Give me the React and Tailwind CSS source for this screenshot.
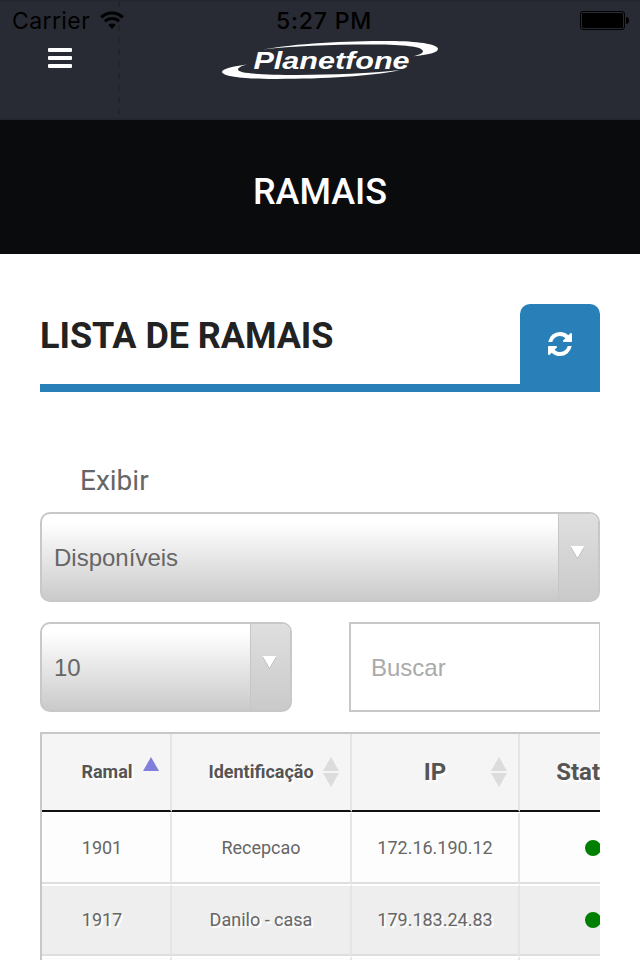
import clsx from "clsx";

const columns = [
    { label: "Ramal", width: "w-[130px]", pad: "pl-[2px]", sort: "asc" },
    { label: "Identificação", width: "w-[180px]", sort: "both" },
    { label: "IP", width: "w-[168px]", sort: "both", big: true },
    { label: "Status", width: "w-[148px]", pad: "pr-1", big: true },
];

const rows = [
    { ramal: "1901", nome: "Recepcao", ip: "172.16.190.12" },
    { ramal: "1917", nome: "Danilo - casa", ip: "179.183.24.83" },
    { ramal: "", nome: "", ip: "" },
];

const StatusBar = () => (
    <div className="flex h-10 items-center px-3 text-black">
        <div className="flex flex-1 items-center gap-[10px]">
            <span className="font-['Inter',sans-serif] text-[23px] leading-10 tracking-[0.4px]">Carrier</span>
            <svg className="-mt-[2px] h-[18px] w-6" viewBox="0 0 24 18" fill="none" stroke="currentColor">
                <path d="M1.2 6.400a15.500 15.500 0 0 1 21.600 0" strokeWidth="3.2" />
                <path d="M5 10.400a10 10 0 0 1 14 0" strokeWidth="3" />
                <path d="M12 18l-3.800-4a5.600 5.600 0 0 1 7.600 0z" fill="currentColor" stroke="none" />
            </svg>
        </div>
        <span className="pl-2 font-['Inter',sans-serif] text-[23px] font-medium leading-10 tracking-[0.8px]">5:27 PM</span>
        <div className="flex flex-1 justify-end">
            <svg className="-mt-[2px] -mr-[2px] h-5 w-[50px]" viewBox="0 0 50 20">
                <rect x="0.5" y="1.5" width="44" height="18" rx="2.5" fill="none" stroke="#000" />
                <rect x="2" y="3" width="41" height="15" rx="1" fill="#000" />
                <path d="M46 7c4 0 4 7 0 7z" fill="#000" />
            </svg>
        </div>
    </div>
);

const Logo = () => (
    <svg className="h-10 w-[218px]" viewBox="221 40 218 40" fill="#fff">
        <path d="M263 49.500C295 43.500 345 41 390 41c27 .1 47 3 48 7.700c0 4-10 6-25 7.500c7-1.500 10-3 10-5.200c-1-4.500-19-6.300-48-6.500c-40-.2-82 1.500-112 5z" />
        <path d="M247 64.500c-14 1.800-25 4.300-25 7.500c1 4.500 22 6.900 52 7c48 .1 98-2.500 126-8.900c-30 3.300-67 4.800-102 4.800c-36 0-60-1.400-60-5.400c0-2 4-3.700 9-5z" />
        <text
            x="253.500"
            y="68.700"
            textLength="156"
            lengthAdjust="spacingAndGlyphs"
            className="font-['Liberation_Sans',sans-serif] text-[24px] font-bold italic"
        >
            Planetfone
        </text>
    </svg>
);

const RefreshIcon = () => (
    <svg className="h-6 w-6" viewBox="0 0 1536 1536" fill="#fff">
        <path d="M1511 928q0 5-1 7-64 268-268 434.500t-478 166.500q-146 0-282.500-55t-243.500-157l-129 129q-19 19-45 19t-45-19-19-45v-448q0-26 19-45t45-19h448q26 0 45 19t19 45-19 45l-137 137q71 66 161 102t187 36q134 0 250-65t186-179q11-17 53-117 8-23 30-23h192q13 0 22.500 9.500t9.500 22.500zm25-800v448q0 26-19 45t-45 19h-448q-26 0-45-19t-19-45 19-45l138-138q-148-137-349-137-134 0-250 65t-186 179q-11 17-53 117-8 23-30 23h-199q-13 0-22.500-9.500t-9.500-22.500v-7q65-268 270-434.500t480-166.500q146 0 284 55.500t245 156.500l130-129q19-19 45-19t45 19 19 45z" />
    </svg>
);

const SelectBox = ({ value, className }) => (
    <div
        className={clsx(
            "flex h-[90px] overflow-hidden rounded-[10px] border-2 border-[#c8c8c8] bg-linear-to-b from-white from-10% to-[#cacaca]",
            className
        )}
    >
        <span className="flex flex-1 items-center pt-[2px] pl-3 font-['Liberation_Sans',sans-serif] text-2xl text-[#666]">
            {value}
        </span>
        <span className="flex w-10 justify-center border-l border-[#c6c6c6] bg-linear-to-b from-[#dfdfdf] to-[#cacaca] pt-[31px] pr-[3px]">
            <svg className="h-[15px] w-[15px]" viewBox="0 0 15 15">
                <path d="M0.500 2h14l-7 12z" fill="#aaa" />
                <path d="M0.500 1h14l-7 12z" fill="#fff" />
            </svg>
        </span>
    </div>
);

const SortIcon = ({ sort }) => (
    <svg className="absolute top-[22px] right-[10px] h-8 w-[18px]" viewBox="0 0 18 32">
        <path d="M9 1l8 14H1z" fill={sort === "asc" ? "#8080dc" : "#dcdcdc"} />
        {sort === "both" && <path d="M9 31l8-14H1z" fill="#dcdcdc" />}
    </svg>
);

const Cell = ({ width, odd, children }) => (
    <div
        className={clsx(
            "flex h-[72px] shrink-0 items-center justify-center border-t-2 border-r-2 border-b-2 border-t-white border-r-[#e5e5e5] border-b-[#dedede]",
            width,
            odd ? "bg-[#eee]" : "bg-[#fdfdfd]"
        )}
    >
        {children}
    </div>
);

const App = () => {
    return (
        <div className="flex h-[960px] w-[640px] flex-col overflow-hidden bg-white font-['Roboto',sans-serif]">
            <header className="relative h-[120px] shrink-0 border-t-2 border-b-2 border-[#252630] bg-[#282b33]">
                <div className="absolute top-0 left-[118px] h-28 w-0.5 bg-[repeating-linear-gradient(to_bottom,#23232b_0px,#23232b_4px,transparent_6px,transparent_10px,#23232b_12px)]" />
                <div className="relative -mt-[1px]">
                    <StatusBar />
                </div>
                <div className="flex pl-12">
                    <div className="mt-[7px] flex w-6 flex-col gap-1">
                        <span className="h-1 rounded-[1px] bg-white" />
                        <span className="h-1 rounded-[1px] bg-white" />
                        <span className="h-1 rounded-[1px] bg-white" />
                    </div>
                    <div className="-mt-[1px] ml-[149px]">
                        <Logo />
                    </div>
                </div>
            </header>

            <div className="flex h-[134px] shrink-0 items-center justify-center bg-[#0a0b0d] pt-[10px]">
                <h1 className="text-4xl font-medium text-white">RAMAIS</h1>
            </div>

            <main className="mx-10 mt-[50px] flex min-h-0 flex-1 flex-col">
                <div className="flex h-[88px] shrink-0 items-start justify-between border-b-8 border-[#2980b9]">
                    <h2 className="pt-3 text-4xl font-bold tracking-[-0.06px] text-[#222]">LISTA DE RAMAIS</h2>
                    <button className="flex h-20 w-20 items-center justify-center rounded-t-[10px] bg-[#2980b9]">
                        <RefreshIcon />
                    </button>
                </div>

                <label className="mt-[69px] pl-10 text-[28px] leading-10 text-[#666]">Exibir</label>
                <SelectBox value="Disponíveis" className="mt-[11px] shrink-0" />

                <div className="mt-5 flex shrink-0 justify-between">
                    <SelectBox value="10" className="w-[252px]" />
                    <div className="flex h-[90px] w-[251px] items-center border-2 border-r border-[#c8c8c8] pt-[2px] pl-5 font-['Liberation_Sans',sans-serif] text-2xl text-[#aaa]">
                        Buscar
                    </div>
                </div>

                <div className="mt-5 min-h-0 flex-1 overflow-hidden border-t-2 border-l-2 border-[#c8c8c8] text-[#666] [text-shadow:2px_2px_0_#fff]">
                    <div className="flex">
                        {columns.map(({ label, width, pad, sort, big }) => (
                            <div
                                key={label}
                                className={clsx(
                                    "relative flex h-[78px] shrink-0 items-center justify-center border-r-2 border-b-2 border-r-[#e5e5e5] border-b-[#111] bg-[#f5f5f5] font-bold text-[#555]",
                                    width,
                                    pad,
                                    big ? "text-2xl" : "text-lg"
                                )}
                            >
                                {label}
                                {sort && <SortIcon sort={sort} />}
                            </div>
                        ))}
                    </div>

                    {rows.map((row, i) => (
                        <div key={i} className="flex text-lg">
                            <Cell width="w-[130px] pr-2" odd={i % 2 === 1}>{row.ramal}</Cell>
                            <Cell width="w-[180px]" odd={i % 2 === 1}>{row.nome}</Cell>
                            <Cell width="w-[168px]" odd={i % 2 === 1}>{row.ip}</Cell>
                            <Cell width="w-[148px] pb-px" odd={i % 2 === 1}>
                                <span className="h-4 w-4 rounded-full bg-[#008000]" />
                            </Cell>
                        </div>
                    ))}
                </div>
            </main>
        </div>
    );
};
export default App;
